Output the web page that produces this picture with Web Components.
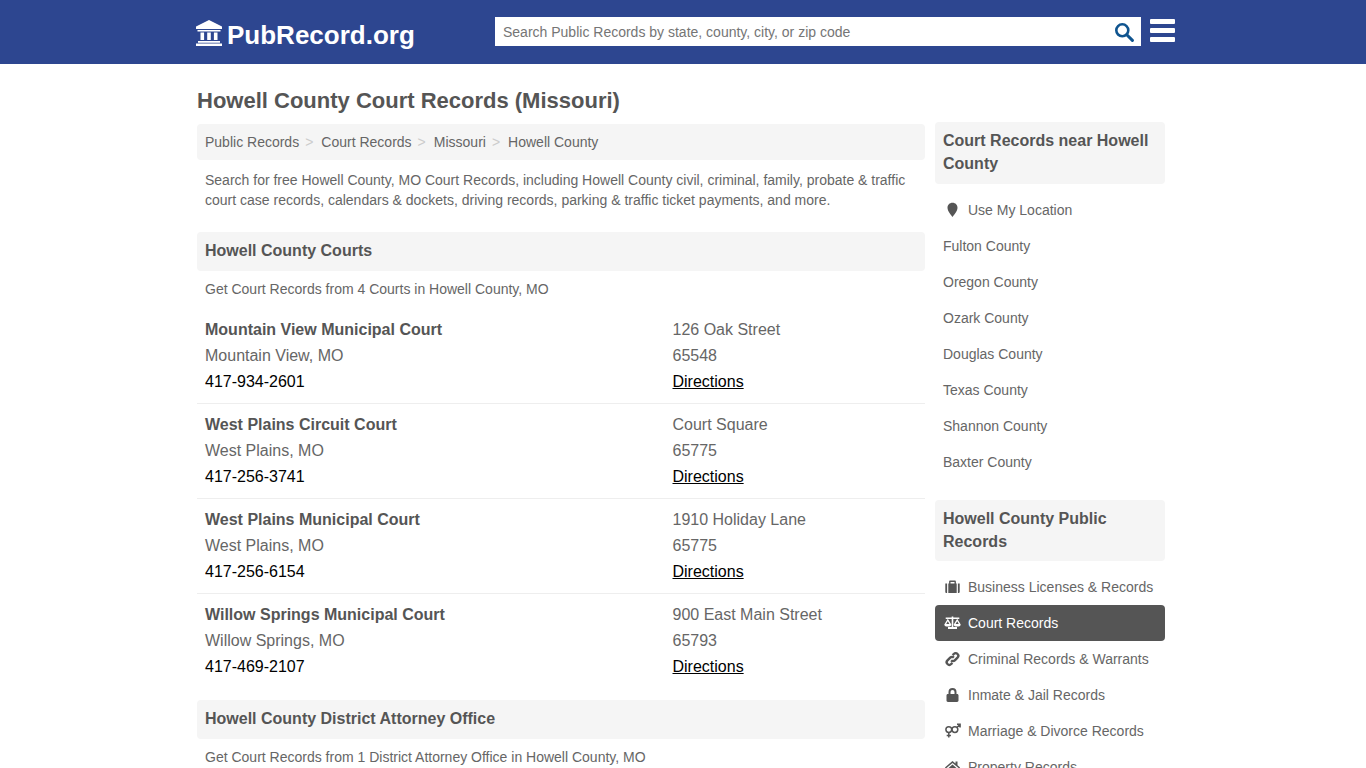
<!DOCTYPE html>
<html lang="en">
<head>
<meta charset="utf-8">
<title>Howell County Court Records (Missouri)</title>
<style>
html,body{margin:0;padding:0;background:#fff;height:768px;overflow:hidden;}
body{font:14px/20px "Liberation Sans",Arial,sans-serif;color:#555;}
</style>
</head>
<body>
<pr-header></pr-header>
<pr-page>
  <pr-title slot="title">Howell County Court Records (Missouri)</pr-title>
  <pr-crumbs slot="main" items="Public Records|Court Records|Missouri|Howell County"></pr-crumbs>
  <pr-text slot="main" style="padding:10px 8px 22px">Search for free Howell County, MO Court Records, including Howell County civil, criminal, family, probate &amp; traffic court case records, calendars &amp; dockets, driving records, parking &amp; traffic ticket payments, and more.</pr-text>
  <pr-head slot="main">Howell County Courts</pr-head>
  <pr-text slot="main" style="padding:8px 8px 10px">Get Court Records from 4 Courts in Howell County, MO</pr-text>
  <pr-court slot="main" name="Mountain View Municipal Court" city="Mountain View, MO" phone="417-934-2601" street="126 Oak Street" zip="65548"></pr-court>
  <pr-court slot="main" name="West Plains Circuit Court" city="West Plains, MO" phone="417-256-3741" street="Court Square" zip="65775"></pr-court>
  <pr-court slot="main" name="West Plains Municipal Court" city="West Plains, MO" phone="417-256-6154" street="1910 Holiday Lane" zip="65775"></pr-court>
  <pr-court slot="main" name="Willow Springs Municipal Court" city="Willow Springs, MO" phone="417-469-2107" street="900 East Main Street" zip="65793" last></pr-court>
  <pr-head slot="main" style="margin-top:12px">Howell County District Attorney Office</pr-head>
  <pr-text slot="main" style="padding:8px 8px 7px">Get Court Records from 1 District Attorney Office in Howell County, MO</pr-text>

  <pr-side-head slot="side">Court Records near Howell County</pr-side-head>
  <pr-side-list slot="side" style="margin:8px 0 20px">
    <pr-link icon="pin">Use My Location</pr-link>
    <pr-link>Fulton County</pr-link>
    <pr-link>Oregon County</pr-link>
    <pr-link>Ozark County</pr-link>
    <pr-link>Douglas County</pr-link>
    <pr-link>Texas County</pr-link>
    <pr-link>Shannon County</pr-link>
    <pr-link>Baxter County</pr-link>
  </pr-side-list>
  <pr-side-head slot="side" style="height:45px">Howell County Public Records</pr-side-head>
  <pr-side-list slot="side" style="margin-top:8px">
    <pr-link icon="case">Business Licenses &amp; Records</pr-link>
    <pr-link icon="scale" active>Court Records</pr-link>
    <pr-link icon="link">Criminal Records &amp; Warrants</pr-link>
    <pr-link icon="lock">Inmate &amp; Jail Records</pr-link>
    <pr-link icon="venus">Marriage &amp; Divorce Records</pr-link>
    <pr-link icon="home">Property Records</pr-link>
  </pr-side-list>
</pr-page>
<script>
const ICONS={
  pin:'<path d="M8 .8C5 .8 3 3 3 5.800 3 9.200 6.800 13.500 8 15 9.200 13.500 13 9.200 13 5.800 13 3 11 .8 8 .8Z"/>',
  case:'<path d="M.8 4.500h1.800V14H1.700C1.200 14 .8 13.600 .8 13.100ZM3.800 4.500h.8V2.600C4.600 2 5.100 1.500 5.700 1.500h4.600c.6 0 1.100.5 1.100 1.100v1.900h.8V14H3.800ZM6 4.500h4V2.900H6ZM13.400 4.500h1.800v8.600c0 .5-.4.9-.9.9h-.9Z"/>',
  scale:'<path fill-rule="evenodd" d="M7.200 1.500h1.600v1h6v1.400H8.800v8.200h3.700V14h-9v-1.900h3.700V3.900h-6V2.500h6ZM3.300 3.800-.2 9.400c0 1.700 1.700 2.200 3.500 2.200s3.500-.5 3.500-2.200ZM3.300 6.200 1.700 8.900h3.200ZM12.700 3.800 9.200 9.400c0 1.700 1.700 2.200 3.500 2.200s3.500-.5 3.500-2.200ZM12.700 6.200l-1.600 2.700h3.200Z"/>',
  link:'<path fill="none" stroke="currentColor" stroke-width="2.400" d="M6.600 9.400a2.600 2.600 0 0 0 3.700 0l2.700-2.700a2.600 2.600 0 0 0-3.700-3.700L8.100 4.200M9.400 6.600a2.600 2.600 0 0 0-3.700 0L3 9.300A2.600 2.600 0 0 0 6.700 13l1.200-1.200"/>',
  lock:'<path fill-rule="evenodd" d="M4 7V5a4 4 0 0 1 8 0v2h.6c.8 0 1.400.6 1.400 1.400v5.200c0 .8-.6 1.400-1.400 1.400H3.400C2.600 15 2 14.400 2 13.600V8.400C2 7.600 2.600 7 3.400 7ZM6 7h4V5a2 2 0 0 0-4 0Z"/>',
  venus:'<g fill="none" stroke="currentColor" stroke-width="1.500"><circle cx="4.300" cy="6.600" r="2.900"/><path d="M4.300 9.500v5M2.200 12.400h4.200"/><circle cx="10.400" cy="6.600" r="2.900"/><path d="M12.400 4.500 15.400 1.500M12.500 1.300h3.100v3.100"/></g>',
  home:'<path d="M8 2 .4 8.400l1 1.100L8 4l6.600 5.500 1-1.100L13 6.200V2.600h-2v1.900ZM3 9.900V15h3.800v-3.600h2.400V15H13V9.900L8 5.600Z"/>'
};
const define=(name,css,html)=>{
  customElements.define(name,class extends HTMLElement{
    connectedCallback(){
      if(this.shadowRoot)return;
      this.attachShadow({mode:'open'}).innerHTML=`<style>${css}</style>${typeof html==='function'?html(this):html}`;
    }
  });
};

define('pr-header',`
:host{display:block;height:64px;background:#2d4690;}
.in{margin-left:195px;width:980px;height:64px;display:flex;align-items:center;}
.logo{display:flex;align-items:center;width:300px;color:#fff;font:bold 26px/34px "Liberation Sans",Arial,sans-serif;margin-top:5px;}
.logo svg{width:28px;height:28px;fill:#fff;margin-right:4px;margin-top:-3px;flex:none;}
.search{width:646px;height:29px;background:#fff;display:flex;align-items:center;justify-content:space-between;box-sizing:border-box;padding:0 7px 0 8px;color:#757575;font-size:14px;margin-top:-1px;}
.search svg{width:20px;height:20px;fill:none;stroke:#0f548f;stroke-width:2.600;flex:none;}
.menu{margin-left:9px;display:flex;flex-direction:column;gap:4.500px;width:25px;margin-top:-3px;}
.menu i{display:block;height:4.500px;background:#fff;border-radius:1px;}
`,`<div class="in">
<div class="logo"><svg viewBox="0 0 28 28"><path d="M14 1 1 7.500V10h26V7.500ZM2.500 11h23v1.500h-23ZM5.500 13.500h3.600V21H5.500ZM12.200 13.500h3.600V21h-3.600ZM18.900 13.500h3.600V21h-3.600ZM3 22h22v1.800H3ZM1 24.600h26V27H1Z"/></svg>PubRecord.org</div>
<div class="search"><span>Search Public Records by state, county, city, or zip code</span><svg viewBox="0 0 20 20"><circle cx="8.300" cy="8.300" r="6"/><path d="m12.800 12.800 5.600 5.600" stroke-linecap="round" stroke-width="3"/></svg></div>
<div class="menu"><i></i><i></i><i></i></div>
</div>`);

define('pr-page',`
:host{display:block;width:968px;margin-left:197px;}
.grid{display:grid;grid-template-columns:728px 230px;column-gap:10px;}
.side{margin-top:-2px;}
`,`<slot name="title"></slot><div class="grid"><div><slot name="main"></slot></div><div class="side"><slot name="side"></slot></div></div>`);

define('pr-title',`
:host{display:block;padding-top:23px;height:37px;font:bold 22px/27px "Liberation Sans",Arial,sans-serif;color:#555;}
`,`<slot></slot>`);

define('pr-crumbs',`
:host{display:block;height:36px;background:#f5f5f5;border-radius:4px;padding:0 8px;box-sizing:border-box;line-height:36px;font-size:14px;color:#666;white-space:nowrap;}
.sep{color:#ccc;padding:0 8px 0 6px;}
`,h=>h.getAttribute('items').split('|').map(s=>`<span>${s}</span>`).join('<span class="sep">&gt;</span>'));

define('pr-text',`
:host{display:block;font-size:14px;line-height:20px;color:#666;}
`,`<slot></slot>`);

define('pr-head',`
:host{display:block;height:39px;background:#f5f5f5;border-radius:4px;padding:0 8px;font:bold 16px/38px "Liberation Sans",Arial,sans-serif;color:#555;}
`,`<slot></slot>`);

define('pr-court',`
:host{display:block;font-size:16px;line-height:26px;color:#666;padding:8px 8px 8px;border-bottom:1px solid #eee;}
:host([last]){border-bottom:0;}
.row{display:grid;grid-template-columns:467.500px 1fr;}
b{color:#555;}
.ph{color:#000;}
a{color:#000;text-decoration:underline;}
`,h=>{
  const a=n=>h.getAttribute(n);
  return `<div class="row"><b>${a('name')}</b><span>${a('street')}</span><span>${a('city')}</span><span>${a('zip')}</span><span class="ph">${a('phone')}</span><a href="#">Directions</a></div>`;
});

define('pr-side-head',`
:host{display:block;background:#f5f5f5;border-radius:4px;padding:7px 8px 9px;font:bold 16px/23px "Liberation Sans",Arial,sans-serif;color:#555;}
`,`<slot></slot>`);

define('pr-side-list',`
:host{display:block;}
`,`<slot></slot>`);

define('pr-link',`
:host{display:flex;align-items:center;height:36px;padding:0 8px;font-size:14px;color:#666;border-radius:4px;white-space:nowrap;}
:host([active]){background:#555;color:#fff;}
svg{width:17px;height:16px;margin-right:7px;margin-left:1px;fill:#555;color:#555;flex:none;}
:host([active]) svg{fill:#fff;color:#fff;}
`,h=>{
  const i=h.getAttribute('icon');
  return `${i?`<svg viewBox="0 0 16 16">${ICONS[i]}</svg>`:''}<slot></slot>`;
});
</script>
</body>
</html>
